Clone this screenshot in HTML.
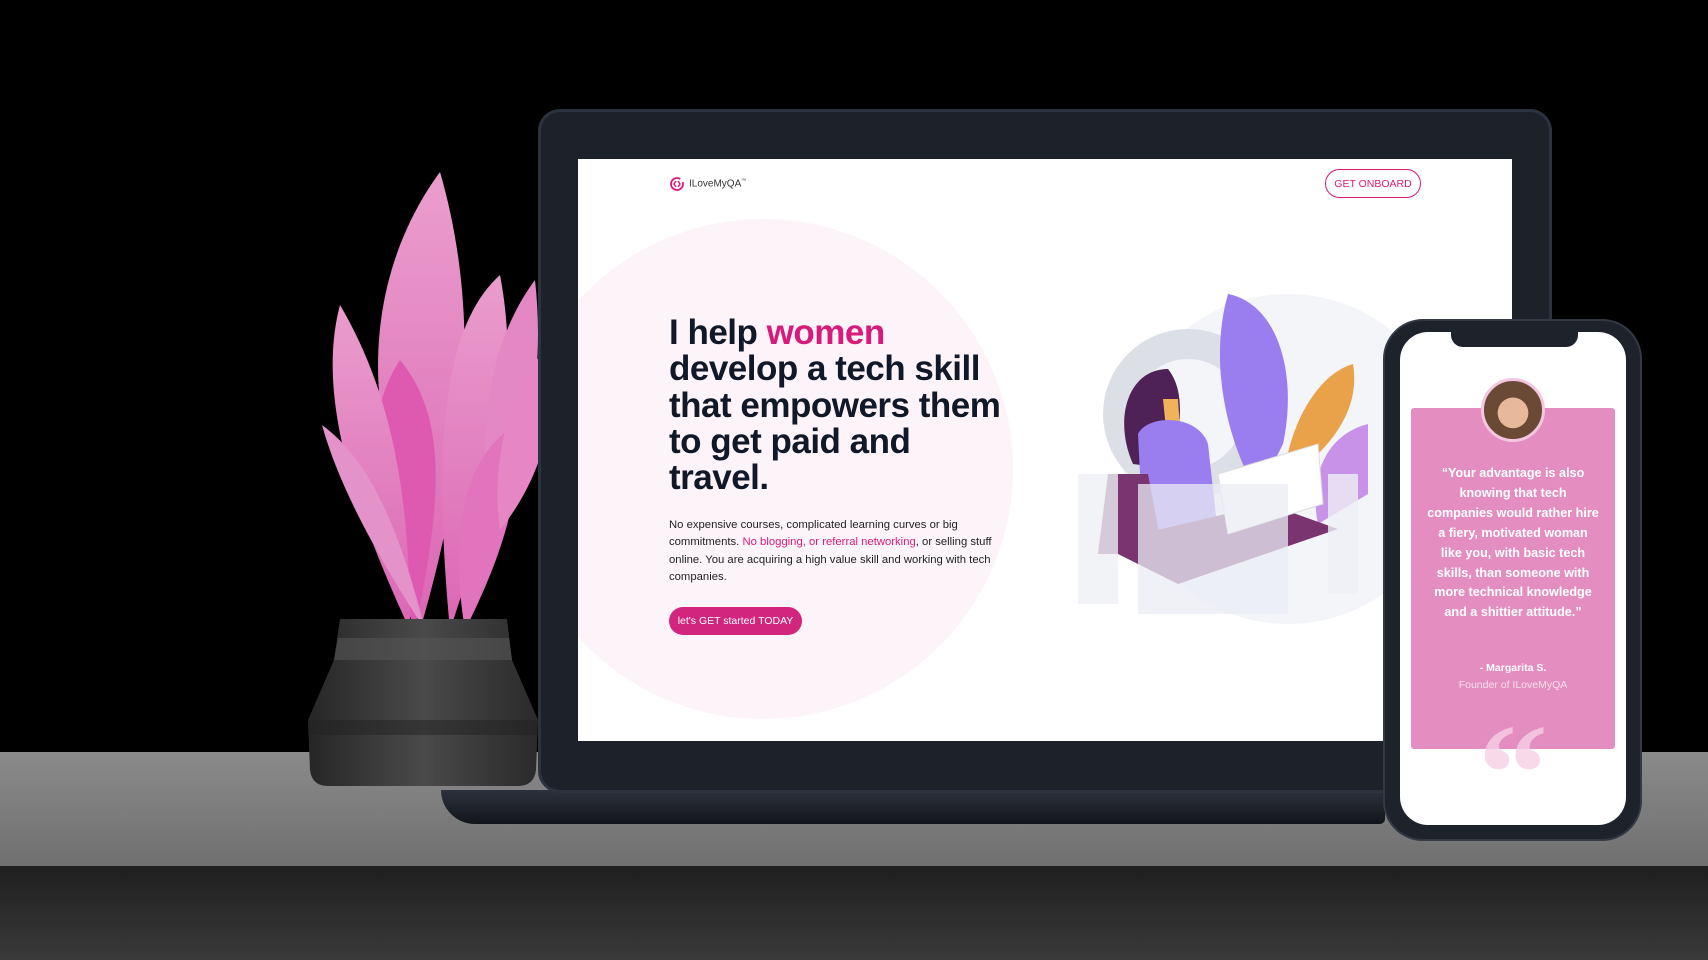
<!DOCTYPE html>
<html><head><meta charset="utf-8"><style>
*{margin:0;padding:0;box-sizing:border-box}
body{width:1708px;height:960px;overflow:hidden;background:#000;position:relative;font-family:"Liberation Sans",sans-serif}
.abs{position:absolute}
</style></head><body>
<div class="abs" style="left:0;top:752px;width:1708px;height:114px;background:linear-gradient(#8a8a8a,#707070)"></div>
<div class="abs" style="left:0;top:866px;width:1708px;height:94px;background:linear-gradient(#1f1f1f,#3a3a3a)"></div>

<!-- plant -->
<svg class="abs" style="left:300px;top:160px" width="260" height="640" viewBox="0 0 260 640">
<defs><linearGradient id="lf" x1="0" y1="0" x2="0" y2="1"><stop offset="0" stop-color="#f7a6d8"/><stop offset="1" stop-color="#e86cbf"/></linearGradient>
<linearGradient id="pot" x1="0" y1="0" x2="1" y2="0"><stop offset="0" stop-color="#262626"/><stop offset=".5" stop-color="#4a4a4a"/><stop offset="1" stop-color="#2a2a2a"/></linearGradient></defs>
<g fill="url(#lf)" opacity=".95">
<path d="M140 12 C90 80 60 180 90 300 L120 470 C170 300 180 150 140 12Z"/>
<path d="M100 200 C60 260 70 350 115 470 C140 350 150 260 100 200Z" fill="#ea5fbb"/>
<path d="M200 115 C150 160 130 260 150 470 C200 320 220 220 200 115Z"/>
<path d="M235 120 C190 180 175 270 190 380 C230 300 245 210 235 120Z" fill="#f08fd0"/>
<path d="M40 145 C20 220 40 320 110 470 C110 330 90 230 40 145Z"/>
<path d="M22 265 C40 330 80 400 125 470 C100 370 70 300 22 265Z" fill="#f19ad5"/>
<path d="M215 265 C160 300 150 380 165 470 C200 400 225 330 215 265Z" fill="#ee7bc8"/>
<path d="M255 180 C210 220 190 300 200 370 C240 320 258 260 255 180Z" fill="#f38ed0"/>
</g>
<path d="M40 459 L207 459 L212 500 L238 560 L236 610 Q234 626 218 626 L28 626 Q12 626 10 610 L8 560 L34 500Z" fill="url(#pot)"/>
<path d="M38 478 L209 478 L212 500 L34 500Z" fill="#555" opacity=".6"/>
<path d="M8 560 L238 560 L237 575 L8 575Z" fill="#222" opacity=".5"/>
</svg>

<!-- laptop base -->
<div class="abs" style="left:441px;top:790px;width:944px;height:34px;background:linear-gradient(#2c323d,#121419);border-radius:0 0 6px 40px"></div>
<!-- laptop bezel -->
<div class="abs" style="left:538px;top:109px;width:1014px;height:684px;background:#1d2129;border-radius:22px;border:3px solid #2d333e"></div>
<div class="abs" style="left:578px;top:159px;width:934px;height:582px;background:#fff;overflow:hidden">
 <div class="abs" style="left:-65px;top:60px;width:500px;height:500px;border-radius:50%;background:#fdf4f9"></div>
 <div class="abs" style="left:91px;top:17px;font-size:10px;color:#333;display:flex;align-items:center;gap:4px">
  <svg width="16" height="16" viewBox="0 0 16 16"><path d="M8 2 A6 6 0 1 0 8 14 A6 6 0 1 0 8 2" fill="none" stroke="#d81b7a" stroke-width="1.8" stroke-dasharray="30 4"/><path d="M7 5 L5 8 L7 11 M9 5 L11 8 L9 11" fill="none" stroke="#d81b7a" stroke-width="1.4"/></svg>
  <span>ILoveMyQA<sup style="font-size:5px">™</sup></span></div>
 <div class="abs" style="left:747px;top:10px;width:96px;height:29px;border:1.5px solid #d81b7a;border-radius:15px;color:#d81b7a;font-size:10.5px;display:flex;align-items:center;justify-content:center">GET ONBOARD</div>
 <div class="abs" style="left:91px;top:156px;font-size:35px;line-height:36.3px;font-weight:bold;color:#111827;letter-spacing:-0.5px">I help <span style="color:#d81b7a">women</span><br>develop a tech skill<br>that empowers them<br>to get paid and<br>travel.</div>
 <div class="abs" style="left:91px;top:358px;width:340px;font-size:11.3px;line-height:17.4px;color:#222">No expensive courses, complicated learning curves or big commitments. <span style="color:#d81b7a">No blogging, or referral networking</span>, or selling stuff online. You are acquiring a high value skill and working with tech companies.</div>
 <div class="abs" style="left:91px;top:448px;width:133px;height:28px;background:#d1257e;border-radius:14px;color:#fff;font-size:10.5px;display:flex;align-items:center;justify-content:center">let's GET started TODAY</div>
 <!-- illustration -->
 <svg class="abs" style="left:490px;top:135px" width="444" height="350" viewBox="0 0 444 350">
  <circle cx="220" cy="165" r="165" fill="#f4f5f9"/>
  <circle cx="120" cy="120" r="85" fill="#dcdfe6"/>
  <circle cx="120" cy="120" r="55" fill="#f4f5f9"/>
  <path d="M160 0 C210 10 230 80 215 150 L190 200 C160 150 140 70 160 0Z" fill="#9a7ef0"/>
  <path d="M285 70 C250 80 220 130 215 190 L250 160 C280 130 290 100 285 70Z" fill="#e9a24a"/>
  <path d="M300 130 C260 140 240 180 250 230 L300 200Z" fill="#c792e8"/>
  <path d="M100 75 C60 75 45 125 65 170 L105 175 C110 140 120 100 100 75Z" fill="#4e2256"/>
  <path d="M95 105 L110 105 L112 135 L98 135Z" fill="#f0b35a"/>
  <path d="M70 140 C80 120 130 120 140 150 L150 240 L75 240Z" fill="#9a7ef0"/>
  <path d="M40 180 L80 180 L95 260 L30 260Z" fill="#7a3470"/>
  <path d="M30 250 L200 210 L270 235 L110 290Z" fill="#7a3470"/>
  <path d="M150 180 L250 150 L255 210 L160 240Z" fill="#fff" stroke="#ddd"/>
  <rect x="70" y="190" width="150" height="130" fill="#e9ecf4" opacity=".75"/>
  <rect x="10" y="180" width="40" height="130" fill="#eef0f5" opacity=".8"/>
  <rect x="260" y="180" width="30" height="120" fill="#eef0f5" opacity=".8"/>
 </svg>
</div>

<!-- phone -->
<div class="abs" style="left:1383px;top:319px;width:259px;height:522px;background:#1d222b;border-radius:40px;border:2px solid #333a46"></div>
<div class="abs" style="left:1400px;top:332px;width:226px;height:493px;background:#fff;border-radius:28px;overflow:hidden">
 <div class="abs" style="left:51px;top:-2px;width:127px;height:17px;background:#1d222b;border-radius:0 0 12px 12px"></div>
 <div class="abs" style="left:11px;top:76px;width:204px;height:341px;background:#e38dc0;border-radius:3px"></div>
 <div class="abs" style="left:81px;top:46px;width:64px;height:64px;border-radius:50%;background:radial-gradient(circle at 50% 55%,#e8b89a 0 35%,#6b4a35 36%);border:3px solid #f4c6df"></div>
 <div class="abs" style="left:26px;top:132px;width:174px;text-align:center;color:#fff;font-weight:bold;font-size:12.6px;line-height:19.9px">“Your advantage is also knowing that tech companies would rather hire a fiery, motivated woman like you, with basic tech skills, than someone with more technical knowledge and a shittier attitude.”</div>
 <div class="abs" style="left:11px;top:330px;width:204px;text-align:center;color:#fff;font-weight:bold;font-size:10.5px">- Margarita S.</div>
 <div class="abs" style="left:11px;top:347px;width:204px;text-align:center;color:#fbe0ee;font-size:10.5px">Founder of ILoveMyQA</div>
 <div class="abs" style="left:58px;top:372px;width:110px;text-align:center;color:#f6d0e6;font-size:140px;font-weight:bold;line-height:140px;font-family:'Liberation Serif',serif;opacity:.8">“</div>
</div>
</body></html>
